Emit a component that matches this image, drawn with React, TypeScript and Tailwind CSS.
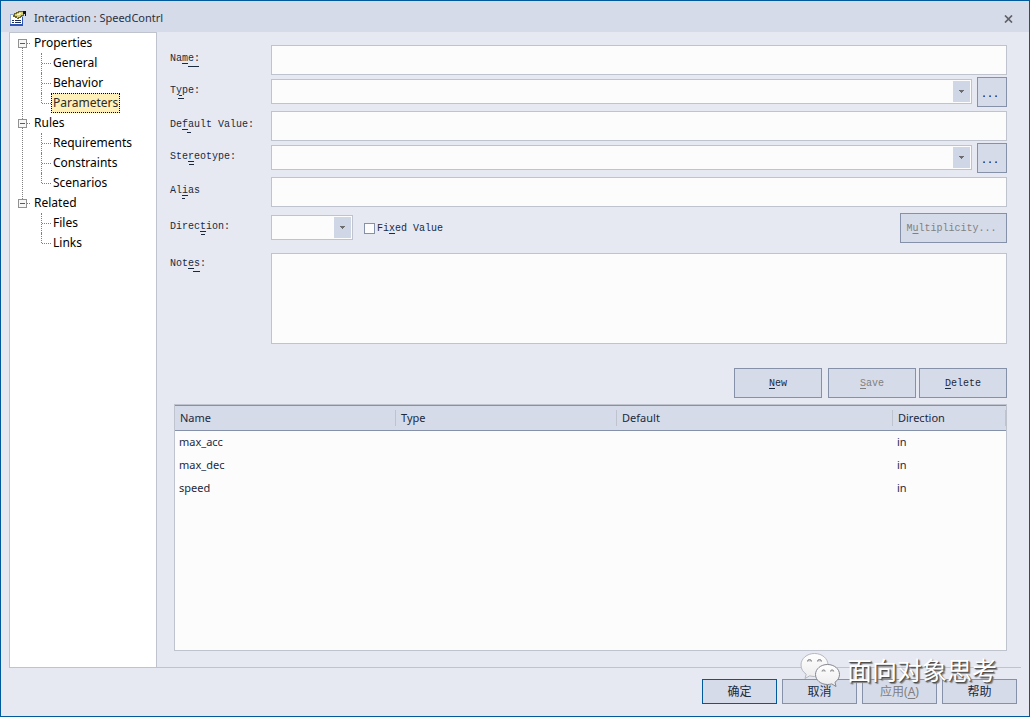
import { ReactNode } from "react";

const ui = "font-['Noto_Sans','Noto_Sans_CJK_SC',sans-serif]";
const mono = "font-['Liberation_Mono','Noto_Sans_CJK_SC',monospace] text-[10px]";
const box = "border border-[#bfc3ce] bg-[#fcfcfc]";
const button = "border border-[#8591a8] bg-[#d6dbe9] disabled:text-[#808080]";

type Branch = { title: string; items: string[] };

const tree: Branch[] = [
  { title: "Properties", items: ["General", "Behavior", "Parameters"] },
  { title: "Rules", items: ["Requirements", "Constraints", "Scenarios"] },
  { title: "Related", items: ["Files", "Links"] },
];

const rows = [
  { name: "max_acc", direction: "in" },
  { name: "max_dec", direction: "in" },
  { name: "speed", direction: "in" },
];

function TitleIcon() {
  return (
    <svg width="17" height="16" viewBox="0 0 17 16" shapeRendering="crispEdges" aria-hidden="true">
      <path d="M0 3h13v12H0z" fill="#8fa9dc" />
      <path d="M0 13h13v2H0zM12 6h1v9h-1z" fill="#2f55b4" />
      <path d="M1 4h11v9H1z" fill="#fff" />
      <path d="M2 9h2v1H2zM5 9h6v1H5zM2 11h2v1H2zM5 11h6v1H5z" fill="#1d2f60" />
      <path d="M4 2h2V1h2V0h6v5h-2v1h-1v1H9v1H7V7H5V6H3V4h1z" fill="#6b6624" />
      <path d="M5 3h2V2h2V1h4v3h-2v1h-1v1H8v1H7V5H5z" fill="#d9cf78" />
      <path d="M7 3h3v1H7zM9 2h2v1H9z" fill="#fbf7cf" />
      <path d="M13 0h3v5h-1V3h-2z" fill="#111" />
    </svg>
  );
}

function Expander() {
  return (
    <svg width="9" height="9" viewBox="0 0 9 9" shapeRendering="crispEdges" aria-hidden="true">
      <rect x="0.5" y="0.5" width="8" height="8" fill="#f6f6f6" stroke="#919191" />
      <path d="M2 4h5v1H2z" fill="#3c5aa6" />
    </svg>
  );
}

function Tree() {
  return (
    <nav className={`w-[148px] shrink-0 border border-b-0 border-[#bfc3ce] bg-white text-[12px] leading-5 text-black ${ui}`}>
      <ul>
        {tree.map((branch, i) => (
          <li key={branch.title} className="flex pl-2">
            <div className="flex w-[9px] flex-col items-center pt-1.5">
              <Expander />
              {i < tree.length - 1 && <span className="-mb-1.5 flex-1 border-l border-dotted border-[#808080]" />}
            </div>
            <div className="flex-1">
              <div className="flex items-center">
                <span className="mr-1 w-[3px] border-t border-dotted border-[#808080]" />
                {branch.title}
              </div>
              <ul className="ml-3.5">
                {branch.items.map((item, j) => (
                  <li key={item} className="flex h-5 items-center">
                    <span className={`w-px self-start border-l border-dotted border-[#808080] ${j === branch.items.length - 1 ? "h-2.5" : "h-5"}`} />
                    <span className="w-[9px] border-t border-dotted border-[#808080]" />
                    <a
                      href="#"
                      className={`border border-dotted px-px leading-[18px] ${item === "Parameters" ? "border-black bg-[#fff0b8] text-[#2b2b2b]" : "border-transparent"}`}
                    >
                      {item}
                    </a>
                  </li>
                ))}
              </ul>
            </div>
          </li>
        ))}
      </ul>
    </nav>
  );
}

function Key({ children }: { children: ReactNode }) {
  return <span className="underline underline-offset-2">{children}</span>;
}

function Label({ id, pre, hot, post, mark }: { id: string; pre: string; hot: string; post: string; mark: string }) {
  return (
    <label htmlFor={id} className="relative w-[101px] shrink-0 pb-[3px] leading-4">
      {pre}
      <Key>{hot}</Key>
      {post}
      <span className={`absolute top-[15px] h-px bg-[#1b293e] ${mark}`} />
    </label>
  );
}

function Combo({ id, className }: { id: string; className: string }) {
  return (
    <div className={`relative mb-px h-[25px] ${className}`}>
      <select id={id} className={`block h-full w-full appearance-none ${box}`} />
      <span className="pointer-events-none absolute inset-y-0.5 right-0.5 flex w-[17px] items-center justify-center bg-[#cfd6e5]">
        <svg width="5" height="3" viewBox="0 0 5 3" shapeRendering="crispEdges" aria-hidden="true">
          <path d="M0 0h5v1H4v1H3v1H2V2H1V1H0z" fill="#6d6d70" />
        </svg>
      </span>
    </div>
  );
}

function Watermark() {
  return (
    <div className="pointer-events-none absolute bottom-7 right-8 flex items-center gap-1.5">
      <svg width="41" height="36" viewBox="0 0 41 36" aria-hidden="true">
        <defs>
          <linearGradient id="bubble" x1="0" y1="0" x2="0" y2="1">
            <stop offset="0" stopColor="#fff" />
            <stop offset="1" stopColor="#ececee" />
          </linearGradient>
        </defs>
        <path
          d="M14.500 1.500C7 1.500 1 6.500 1 13c0 4 2 7 5.200 9.200L5 26.500l4.800-2.700c1.500.5 3 .7 4.700.7C22 24.500 28 19.500 28 13S22 1.500 14.500 1.500z"
          fill="url(#bubble)"
          stroke="#b5b8c0"
          strokeWidth="1"
        />
        <path
          d="M27.500 12.500c-6.700 0-12 4.400-12 10s5.300 10 12 10c1.600 0 3-.2 4.300-.6l4.200 2.600-1-4.300c2.800-1.800 4.500-4.600 4.500-7.700 0-5.600-5.300-10-12-10z"
          fill="url(#bubble)"
          stroke="#84878f"
          strokeWidth="1"
        />
        <path d="M7.500 9.500a2 2 0 0 1 4 0M17.500 9.500a2 2 0 0 1 4 0M22 19.500a1.600 1.600 0 0 1 3.200 0M30.500 19.500a1.600 1.600 0 0 1 3.200 0" fill="#c8c8cc" stroke="#85858a" strokeWidth="1" />
      </svg>
      <span className="text-[25px] leading-8 text-white [text-shadow:1px_1px_1px_#444,2px_2px_1px_#888]">面向对象思考</span>
    </div>
  );
}

export default function App() {
  return (
    <main className={`relative flex min-h-screen flex-col border border-[#005a9c] bg-[#e6e9f2] text-[#1b293e] ${ui}`}>
      <header className="flex h-[31px] items-center bg-[#d6dbe9] pl-[9px] pr-4 pt-1 text-[11px]">
        <TitleIcon />
        <h1 className="ml-[7px] flex-1 text-[#2b3142]">Interaction : SpeedContrl</h1>
        <button type="button" aria-label="Close">
          <svg width="9" height="8" viewBox="0 0 9 8" aria-hidden="true">
            <path d="M1 .5l7 7M8 .5l-7 7" stroke="#5f6068" strokeWidth="1.700" />
          </svg>
        </button>
      </header>

      <div className="flex flex-1 pl-2">
        <Tree />
        <form className={`flex flex-1 flex-col pb-4 pl-[13px] pr-[22px] pt-[13px] ${mono}`}>
          <div className="flex h-[30px] items-center">
            <Label id="name" pre="Na" hot="m" post="e:" mark="left-[18px] w-[11px]" />
            <input id="name" className={`h-full flex-1 px-1 ${box}`} />
          </div>
          <div className="mt-0.5 flex h-[30px] items-center">
            <Label id="type" pre="T" hot="y" post="pe:" mark="left-2 w-1.5" />
            <Combo id="type" className="flex-1" />
            <button type="button" aria-label="Browse types" className={`ml-[5px] h-full w-[30px] pr-1 pt-1 text-black ${button}`}>...</button>
          </div>
          <div className="mt-1 flex h-[30px] items-center">
            <Label id="default" pre="De" hot="f" post="ault Value:" mark="left-[17px] w-1" />
            <input id="default" className={`h-full flex-1 px-1 ${box}`} />
          </div>
          <div className="mt-0.5 flex h-[30px] items-center">
            <Label id="stereotype" pre="Ste" hot="r" post="eotype:" mark="left-[19px] w-[5px]" />
            <Combo id="stereotype" className="flex-1" />
            <button type="button" aria-label="Browse stereotypes" className={`ml-[5px] h-full w-[30px] pr-1 pt-1 text-black ${button}`}>...</button>
          </div>
          <div className="mt-1 flex h-[30px] items-center">
            <Label id="alias" pre="Al" hot="i" post="as" mark="left-3 w-[3px]" />
            <input id="alias" className={`h-full flex-1 px-1 ${box}`} />
          </div>
          <div className="mt-1.5 flex h-[30px] items-center">
            <Label id="direction" pre="Direc" hot="t" post="ion:" mark="left-[31px] w-1" />
            <Combo id="direction" className="w-[82px]" />
            <label className="ml-[11px] flex items-center gap-0.5">
              <input type="checkbox" className="h-[11px] w-[11px] appearance-none border border-[#8591a8] bg-[#fcfcfc]" />
              <span>Fi<Key>x</Key>ed Value</span>
            </label>
            <button type="button" disabled className={`ml-auto h-full w-[107px] pr-1 ${button}`}>
              M<Key>u</Key>ltiplicity...
            </button>
          </div>
          <div className="mt-2.5 flex items-start">
            <div className="flex pt-[3px]">
              <Label id="notes" pre="Not" hot="e" post="s:" mark="left-[23px] w-[7px]" />
            </div>
            <textarea id="notes" className={`h-[91px] flex-1 resize-none p-1 ${box}`} />
          </div>
          <div className="mt-6 flex h-[30px] justify-end">
            <button type="button" className={`w-[88px] ${button}`}><Key>N</Key>ew</button>
            <button type="button" disabled className={`ml-1.5 w-[88px] ${button}`}><Key>S</Key>ave</button>
            <button type="button" className={`ml-[3px] w-[88px] ${button}`}><Key>D</Key>elete</button>
          </div>

          <div className={`ml-1 mt-1.5 flex-1 text-[11px] ${box} ${ui}`}>
            <table className="w-full table-fixed border-collapse text-left">
              <colgroup>
                <col className="w-[26.6%]" />
                <col className="w-[26.6%]" />
                <col className="w-[33.2%]" />
                <col />
              </colgroup>
              <thead>
                <tr className="h-[25px] border-y border-[#8591a8] bg-[#d6dbe9]">
                  {["Name", "Type", "Default", "Direction"].map((title) => (
                    <th key={title} className="p-0 font-normal">
                      <div className="flex h-4 items-center border-r border-[#bfc3ce] pl-[5px]">{title}</div>
                    </th>
                  ))}
                </tr>
              </thead>
              <tbody>
                {rows.map((row) => (
                  <tr key={row.name} className="h-[23px]">
                    <td className="p-0 pl-1">{row.name}</td>
                    <td />
                    <td />
                    <td className="p-0 pl-1">{row.direction}</td>
                  </tr>
                ))}
              </tbody>
            </table>
          </div>
        </form>
      </div>

      <footer className="ml-2 mr-2 flex justify-end gap-[5px] border-t border-[#bfc3ce] pb-3 pr-1 pt-[11px] text-[12px]">
        <button type="button" className="h-[25px] w-[75px] border border-[#005a9c] bg-[#d6dbe9]">确定</button>
        <button type="button" className={`h-[25px] w-[75px] ${button}`}>取消</button>
        <button type="button" disabled className={`h-[25px] w-[75px] ${button}`}>应用(<Key>A</Key>)</button>
        <button type="button" className={`h-[25px] w-[75px] ${button}`}>帮助</button>
      </footer>
      <Watermark />
    </main>
  );
}
